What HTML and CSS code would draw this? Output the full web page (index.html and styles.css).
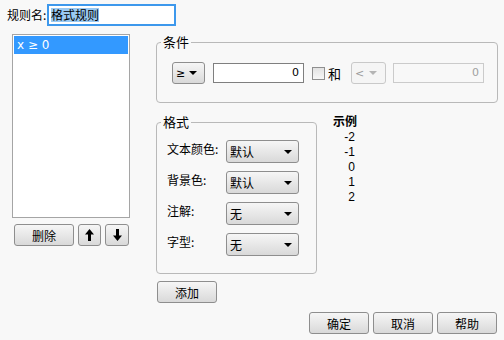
FILE: index.html
```html
<!DOCTYPE html>
<html lang="zh">
<head>
  <meta charset="UTF-8" />
  <title>格式规则</title>
  <link rel="stylesheet" href="styles.css">
</head>
<body>
  <div class="dialog">
    <div class="name-row">
      <span class="name-label">规则名:</span>
      <div class="name-input"><span class="sel">格式规则</span></div>
    </div>

    <div class="main">
      <div class="rules">
        <div class="rule-list">
          <div class="rule selected">x ≥ 0</div>
        </div>
        <div class="rule-buttons">
          <button class="btn btn-delete">删除</button>
          <button class="btn btn-up" title="上移">
            <svg width="9" height="12" viewBox="0 0 9 12"><polygon points="4.5,0 9,5.5 6,5.5 6,12 3,12 3,5.5 0,5.5" fill="#000"/></svg>
          </button>
          <button class="btn btn-down" title="下移">
            <svg width="9" height="12" viewBox="0 0 9 12"><polygon points="3,0 6,0 6,6.5 9,6.5 4.5,12 0,6.5 3,6.5" fill="#000"/></svg>
          </button>
        </div>
      </div>

      <div class="editor">
        <fieldset class="group cond">
          <legend>条件</legend>
          <div class="cond-body">
            <div class="select op"><span class="latin">≥</span><span class="arrow"></span></div>
            <div class="num-input latin">0</div>
            <span class="check"></span>
            <span class="and-label">和</span>
            <div class="select op-off"><span class="latin">&lt;</span><span class="arrow"></span></div>
            <div class="num-input num-off latin">0</div>
          </div>
        </fieldset>

        <div class="format-row">
          <fieldset class="group fmt">
            <legend>格式</legend>
            <div class="fmt-body">
              <span class="fmt-label">文本颜色:</span>
              <div class="select tall"><span>默认</span><span class="arrow"></span></div>
              <span class="fmt-label">背景色:</span>
              <div class="select tall"><span>默认</span><span class="arrow"></span></div>
              <span class="fmt-label">注解:</span>
              <div class="select tall"><span>无</span><span class="arrow"></span></div>
              <span class="fmt-label">字型:</span>
              <div class="select tall"><span>无</span><span class="arrow"></span></div>
            </div>
          </fieldset>

          <div class="example">
            <div class="example-title">示例</div>
            <div class="example-values">
              <div>-2</div>
              <div>-1</div>
              <div>0</div>
              <div>1</div>
              <div>2</div>
            </div>
          </div>
        </div>

        <button class="btn btn-add">添加</button>
      </div>
    </div>

    <div class="footer">
      <button class="btn">确定</button>
      <button class="btn">取消</button>
      <button class="btn">帮助</button>
    </div>
  </div>
</body>
</html>
```

FILE: styles.css
```css
* {
  box-sizing: border-box;
}

body {
  margin: 0;
  width: 504px;
  height: 340px;
  overflow: hidden;
  background: #f8f8f8;
  font-family: "Noto Sans CJK SC", sans-serif;
  font-size: 12px;
  color: #000;
}

.latin {
  font-family: "DejaVu Sans", "Noto Sans CJK SC", sans-serif;
  font-size: 11px;
}

.dialog {
  padding-top: 4px;
}

/* name row */
.name-row {
  display: flex;
  align-items: center;
  height: 22px;
  padding-left: 7px;
}

.name-label {
  width: 40px;
  line-height: 22px;
  white-space: nowrap;
}

.name-input {
  display: flex;
  align-items: center;
  width: 129px;
  height: 22px;
  padding: 0 2px;
  border: 2px solid #3d98ec;
  background: #fff;
}

.sel {
  background: #99c9f2;
  line-height: 14px;
}

/* main area */
.main {
  display: flex;
  margin-top: 8px;
}

.rules {
  width: 118px;
  margin-left: 12px;
}

.rule-list {
  height: 184px;
  padding: 1px;
  border: 1px solid #a5a5a5;
  background: #fff;
}

.rule {
  height: 18px;
  padding-left: 3px;
  font-family: "DejaVu Sans", sans-serif;
  font-size: 12px;
  line-height: 18px;
}

.rule.selected {
  background: #3399ff;
  color: #fff;
}

.rule-buttons {
  display: flex;
  gap: 4px;
  margin-top: 6px;
  padding-left: 2px;
}

.btn {
  display: flex;
  align-items: center;
  justify-content: center;
  height: 22px;
  padding: 0;
  border: 1px solid #8e8e8e;
  border-radius: 3px;
  background: linear-gradient(to bottom, #f6f6f6, #d9d9d9);
  font: inherit;
  color: #000;
}

.btn-delete {
  width: 60px;
}

.btn-up {
  width: 23px;
}

.btn-down {
  width: 24px;
}

.editor {
  width: 342px;
  margin-left: 26px;
}

/* groups */
.group {
  margin: 0;
  padding: 0;
  min-width: 0;
  border: 1px solid #b9b9b9;
  border-radius: 4px;
}

.group legend {
  margin-left: 4px;
  padding: 0 2px;
  font-size: 13px;
  line-height: 16px;
}

.cond {
  width: 342px;
}

.cond-body {
  display: flex;
  align-items: center;
  padding: 12px 0 18px 15px;
}

.select {
  display: flex;
  align-items: center;
  justify-content: space-between;
  height: 22px;
  padding: 0 6px 0 3px;
  border: 1px solid #8e8e8e;
  border-radius: 3px;
  background: linear-gradient(to bottom, #f6f6f6, #d9d9d9);
}

.select.tall {
  height: 23px;
}

.arrow {
  width: 0;
  height: 0;
  border-left: 4px solid transparent;
  border-right: 4px solid transparent;
  border-top: 4px solid #000;
}

.op {
  width: 33px;
  padding-right: 7px;
}

.num-input {
  width: 91px;
  height: 20px;
  margin-left: 8px;
  padding-right: 4px;
  border: 1px solid #7f7f7f;
  background: #fff;
  text-align: right;
  line-height: 18px;
}

.check {
  width: 13px;
  height: 13px;
  margin-left: 8px;
  border: 1px solid #8f8f8f;
  background: linear-gradient(to bottom, #e2e2e2, #f7f7f7);
}

.and-label {
  margin-left: 3px;
  font-size: 13px;
}

.op-off {
  width: 35px;
  margin-left: 10px;
  padding-right: 8px;
  border-color: #c9c9c9;
  background: #f5f5f5;
  color: #9a9a9a;
}

.op-off .arrow {
  border-top-color: #b4b4b4;
}

.num-off {
  margin-left: 7px;
  border-color: #cbcbcb;
  background: #f8f8f8;
  color: #a0a0a0;
}

/* format */
.format-row {
  display: flex;
  align-items: flex-start;
  margin-top: 11px;
}

.fmt {
  width: 161px;
  flex-shrink: 0;
}

.fmt-body {
  display: grid;
  grid-template-columns: 59px 73px;
  row-gap: 8px;
  padding: 10px 0 17px 10px;
}

.fmt-label {
  padding-top: 1px;
  line-height: 16px;
  white-space: nowrap;
}

.example {
  margin-left: 16px;
}

.example-title {
  font-weight: bold;
  line-height: 14px;
}

.example-values {
  width: 22px;
  margin-top: 2px;
  font-family: "Liberation Sans", sans-serif;
  font-size: 12px;
  text-align: right;
  line-height: 15px;
}

.btn-add {
  width: 60px;
  margin-top: 7px;
  margin-left: 1px;
}

/* footer */
.footer {
  display: flex;
  justify-content: flex-end;
  gap: 4px;
  margin-top: 9px;
  padding-right: 7px;
}

.footer .btn {
  width: 60px;
}
```
